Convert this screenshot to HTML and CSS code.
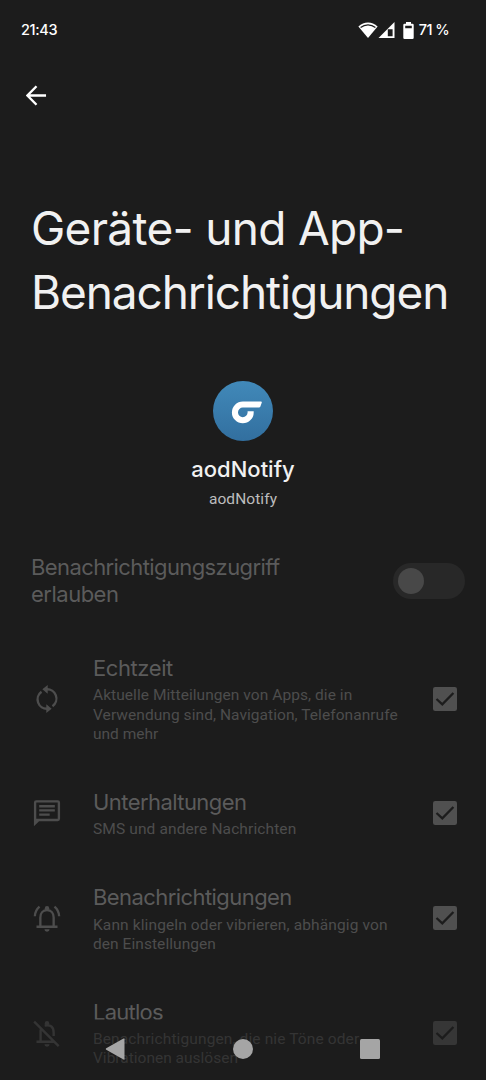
FILE: index.html
```html
<!DOCTYPE html>
<html lang="de">
<head>
<meta charset="utf-8">
<title>Geräte- und App-Benachrichtigungen</title>
<link rel="stylesheet" href="styles.css">
</head>
<body>
<div class="screen">
  <header class="status">
    <span class="time">21:43</span>
    <div class="status-icons">
      <svg class="wifi" viewBox="0 0 20 16"><path d="M0.4 4.6C6 -1 14 -1 19.6 4.6L10 16Z" fill="#fff"/><path d="M2.6 5.6C7 2 13 2 17.4 5.6" fill="none" stroke="#1c1c1c" stroke-width="1.3"/></svg>
      <svg class="signal" viewBox="0 0 17 16"><path d="M16.5 0V16H0.5ZM14.6 7.2H9.8V14.2H14.6Z" fill="#fff" fill-rule="evenodd"/></svg>
      <svg class="battery" viewBox="0 0 11 17"><path d="M3 0H8V1.8H9.5Q10.7 1.8 10.7 3V15.7Q10.7 17 9.5 17H1.5Q.3 17 .3 15.7V3Q.3 1.8 1.5 1.8H3ZM2.2 3.8V6.3H8.8V3.8Z" fill="#fff" fill-rule="evenodd"/></svg>
      <span class="percent">71 %</span>
    </div>
  </header>
  <nav class="appbar">
    <svg class="back" viewBox="0 0 22 22"><path d="M21 11H2M11 1.3L1.5 11L11 20.7" fill="none" stroke="#fff" stroke-width="2.5"/></svg>
  </nav>
  <h1 class="title"><span class="line t1">Geräte- und App-</span><span class="line t2">Benachrichtigungen</span></h1>
  <section class="app">
    <svg class="logo" viewBox="0 0 60 60"><defs><linearGradient id="g" x1="0" y1="0" x2="0" y2="1"><stop offset="0" stop-color="#4189b9"/><stop offset="1" stop-color="#326f9f"/></linearGradient></defs><circle cx="30" cy="30" r="30" fill="url(#g)"/><path d="M48 20.500H29.800A10.900 10.900 0 1 0 40.700 31.400V30.300H34.600V31.500A4.800 4.800 0 1 1 29.800 26.600H46Q47 26.600 47.400 25.500L48.800 21.600Q49 20.500 48 20.500Z" fill="#fff"/></svg>
    <div class="app-name">aodNotify</div>
    <div class="app-sub">aodNotify</div>
  </section>
  <section class="access">
    <div class="heading"><span class="line a1">Benachrichtigungszugriff</span><span class="line a2">erlauben</span></div>
    <div class="switch"><div class="thumb"></div></div>
  </section>
  <main class="list">
    <div class="row">
      <svg class="icon" viewBox="0 0 24 24"><path d="M7.300 5.800A8 8 0 0 0 12.500 20.300M16.700 18.200A8 8 0 0 0 11.500 3.700" class="stroke"/><path d="M12.600 0V7.400L8 3.700ZM11.400 16.600V24L16 20.300Z"/></svg>
      <div class="text"><div class="heading h1">Echtzeit</div><p class="desc"><span class="line d1">Aktuelle Mitteilungen von Apps, die in</span><span class="line d2">Verwendung sind, Navigation, Telefonanrufe</span><span class="line d3">und mehr</span></p></div>
      <svg class="check" viewBox="0 0 24 24"><rect width="24" height="24" rx="2.2"/><path d="M3.5 12L9.3 17.3L20.4 6"/></svg>
    </div>
    <div class="row">
      <svg class="icon" viewBox="0 0 24 24"><path fill-rule="evenodd" d="M2.800 1H21.200Q23.200 1 23.200 3V17Q23.200 19 21.200 19H5.200L.8 23.400V3Q.8 1 2.800 1ZM2.800 3V17H21.200V3ZM5.300 5.200H18.700V7.200H5.300ZM5.300 8.800H18.700V10.800H5.300ZM5.300 12.400H14.300V14.400H5.300Z"/></svg>
      <div class="text"><div class="heading h2">Unterhaltungen</div><p class="desc"><span class="line d4">SMS und andere Nachrichten</span></p></div>
      <svg class="check" viewBox="0 0 24 24"><rect width="24" height="24" rx="2.2"/><path d="M3.5 12L9.3 17.3L20.4 6"/></svg>
    </div>
    <div class="row">
      <svg class="icon" viewBox="0 0 24 24"><path d="M6.300 19V11.500C6.300 8 8.500 5.300 12 5.300S17.700 8 17.700 11.500V19M3 19.500H21M1.600 10.500Q1.800 5.500 5.600 2.300M22.400 10.500Q22.200 5.500 18.400 2.300" class="stroke"/><circle cx="12" cy="3.600" r="1.900"/><path d="M9.800 21.700H14.200A2.200 2 0 0 1 9.800 21.700Z"/></svg>
      <div class="text"><div class="heading h3">Benachrichtigungen</div><p class="desc"><span class="line d5">Kann klingeln oder vibrieren, abhängig von</span><span class="line d6">den Einstellungen</span></p></div>
      <svg class="check" viewBox="0 0 24 24"><rect width="24" height="24" rx="2.2"/><path d="M3.5 12L9.3 17.3L20.4 6"/></svg>
    </div>
    <div class="row">
      <svg class="icon" viewBox="0 0 24 24"><path d="M6.500 19V9M3 19.500H18M10 5.700Q17.700 4.200 17.700 11.500V14.500M1 2.200L22 23.200" class="stroke"/><circle cx="12" cy="3.600" r="1.900"/><path d="M9.800 21.700H14.200A2.200 2 0 0 1 9.800 21.700Z"/></svg>
      <div class="text"><div class="heading h4">Lautlos</div><p class="desc"><span class="line d7">Benachrichtigungen, die nie Töne oder</span><span class="line d8">Vibrationen auslösen</span></p></div>
      <svg class="check" viewBox="0 0 24 24"><rect width="24" height="24" rx="2.2"/><path d="M3.5 12L9.3 17.3L20.4 6"/></svg>
    </div>
  </main>
  <footer class="navbar">
    <svg viewBox="0 0 22 22"><path d="M19.500 .5V21.500Q19.500 22 18.500 21.500L1.200 11.800Q.2 11 1.200 10.200L18.500 .5Z"/></svg>
    <svg viewBox="0 0 22 22"><circle cx="11" cy="11" r="10"/></svg>
    <svg viewBox="0 0 22 22"><rect x="1" y="1" width="20" height="20" rx="1.500"/></svg>
  </footer>
</div>
</body>
</html>
```
FILE: styles.css
```css
* { box-sizing: border-box; }
body { margin: 0; background: #1c1c1c; }
.screen { position: relative; width: 486px; height: 1080px; overflow: hidden; background: #1c1c1c; color: #f1f1f1; font-family: Inter, Roboto, sans-serif; display: flex; flex-direction: column; }
.line { display: block; white-space: nowrap; }
.status { height: 60px; padding: 0 37px 0 21px; display: flex; justify-content: space-between; align-items: center; color: #fff; font-size: 14.5px; font-weight: 500; line-height: 20px; flex: none; }
.time { letter-spacing: -.35px; }
.percent { letter-spacing: -.6px; }
.status-icons { display: flex; align-items: center; }
.wifi { width: 20px; height: 16px; }
.signal { width: 17px; height: 16px; margin-right: 8px; }
.battery { width: 11px; height: 17px; margin-right: 5px; }
.appbar { height: 136px; padding: 25px 0 0 26px; flex: none; }
.back { display: block; width: 21px; height: 21px; }
.title { margin: 0; padding-left: 31px; font-size: 46px; line-height: 64px; font-weight: 400; }
.t1 { letter-spacing: -.7px; }
.t2 { letter-spacing: -1.1px; }
.app { display: flex; flex-direction: column; align-items: center; padding-top: 57px; }
.logo { width: 60px; height: 60px; }
.app-name { margin-top: 13.5px; font-size: 22px; font-weight: 500; line-height: 28px; }
.app-sub { margin-top: 6.5px; font: 15.5px/20px Roboto, sans-serif; color: #bdbdbd; letter-spacing: .08px; }
.access { display: flex; justify-content: space-between; align-items: center; margin-top: 44.5px; padding: 0 21px 0 31px; }
.heading { font-size: 22px; line-height: 27.3px; color: #5b5b5b; white-space: nowrap; }
.a1 { letter-spacing: -.6px; }
.a2 { letter-spacing: -.5px; }
.h1 { letter-spacing: -.42px; }
.h2, .h3 { letter-spacing: -.57px; }
.h4 { letter-spacing: -.75px; }
.switch { width: 72px; height: 36px; padding: 5px; border-radius: 18px; background: #282828; }
.thumb { width: 26px; height: 26px; border-radius: 50%; background: #484848; }
.list { display: flex; flex-direction: column; gap: 44.7px; margin-top: 46px; }
.row { display: grid; grid-template-columns: 28px 1fr 24px; column-gap: 32.5px; align-items: center; padding: 0 29.5px 0 32.5px; }
.icon { width: 28px; height: 28px; fill: #4d4d4d; }
.icon .stroke { fill: none; stroke: #4d4d4d; stroke-width: 2; }
.text { min-width: 0; padding-top: 1px; margin-bottom: -1px; }
.desc { margin: 4px 0 0; font: 15.5px/19.3px Roboto, sans-serif; color: #4d4d4d; }
.d1, .d2 { letter-spacing: .06px; }
.d4, .d5, .d7 { letter-spacing: .12px; }
.d6 { letter-spacing: .06px; }
.check { width: 24px; height: 24px; fill: #505050; }
.check path { fill: none; stroke: #1c1c1c; stroke-width: 2.3; }
.navbar { position: absolute; left: 0; right: 0; bottom: 0; height: 61px; padding: 0 105px 1px; display: flex; justify-content: space-between; align-items: center; background: rgba(28, 28, 28, .5); }
.navbar svg { width: 22px; height: 22px; fill: #a5a5a5; }
```
